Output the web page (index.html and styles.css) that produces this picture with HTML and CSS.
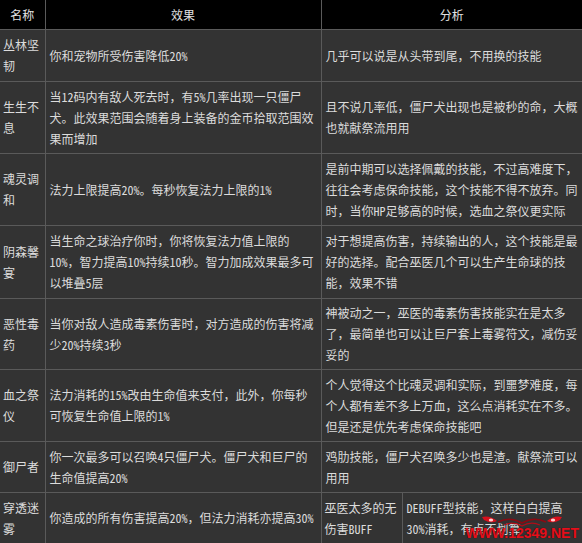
FILE: index.html
```html
<!DOCTYPE html>
<html lang="zh-CN">
<head>
<meta charset="utf-8">
<title>巫医被动技能分析</title>
<link rel="stylesheet" href="styles.css">
</head>
<body>
<div class="page">
<table class="sheet">
  <colgroup>
    <col class="w-name">
    <col class="w-effect">
    <col class="w-note-a">
    <col class="w-note-b">
  </colgroup>
  <thead>
    <tr class="r-head"><th>名称</th><th>效果</th><th colspan="2">分析</th></tr>
  </thead>
  <tbody>
    <tr class="r2">
      <td class="name">丛林坚韧</td>
      <td>你和宠物所受伤害降低<span class="n">20%</span></td>
      <td colspan="2">几乎可以说是从头带到尾，不用换的技能</td>
    </tr>
    <tr class="r3">
      <td class="name">生生不息</td>
      <td>当<span class="n">12</span>码内有敌人死去时，有<span class="n">5%</span>几率出现一只僵尸犬。此效果范围会随着身上装备的金币拾取范围效果而增加</td>
      <td colspan="2">且不说几率低，僵尸犬出现也是被秒的命，大概也就献祭流用用</td>
    </tr>
    <tr class="r3">
      <td class="name">魂灵调和</td>
      <td>法力上限提高<span class="n">20%</span>。每秒恢复法力上限的<span class="n">1%</span></td>
      <td colspan="2">是前中期可以选择佩戴的技能，不过高难度下，往往会考虑保命技能，这个技能不得不放弃。同时，当你<span class="n">HP</span>足够高的时候，选血之祭仪更实际</td>
    </tr>
    <tr class="r3b">
      <td class="name">阴森馨宴</td>
      <td>当生命之球治疗你时，你将恢复法力值上限的<span class="n">10%</span>，智力提高<span class="n">10%</span>持续<span class="n">10</span>秒。智力加成效果最多可以堆叠<span class="n">5</span>层</td>
      <td colspan="2">对于想提高伤害，持续输出的人，这个技能是最好的选择。配合巫医几个可以生产生命球的技能，效果不错</td>
    </tr>
    <tr class="r3c">
      <td class="name">恶性毒药</td>
      <td>当你对敌人造成毒素伤害时，对方造成的伤害将减少<span class="n">20%</span>持续<span class="n">3</span>秒</td>
      <td colspan="2">神被动之一，巫医的毒素伤害技能实在是太多了，最简单也可以让巨尸套上毒雾符文，减伤妥妥的</td>
    </tr>
    <tr class="r3">
      <td class="name">血之祭仪</td>
      <td>法力消耗的<span class="n">15%</span>改由生命值来支付，此外，你每秒可恢复生命值上限的<span class="n">1%</span></td>
      <td colspan="2">个人觉得这个比魂灵调和实际，到噩梦难度，每个人都有差不多上万血，这么点消耗实在不多。但是还是优先考虑保命技能吧</td>
    </tr>
    <tr class="r2b">
      <td class="name">御尸者</td>
      <td>你一次最多可以召唤<span class="n">4</span>只僵尸犬。僵尸犬和巨尸的生命值提高<span class="n">20%</span></td>
      <td colspan="2">鸡肋技能，僵尸犬召唤多少也是渣。献祭流可以用用</td>
    </tr>
    <tr class="r2b">
      <td class="name">穿透迷雾</td>
      <td>你造成的所有伤害提高<span class="n">20%</span>，但法力消耗亦提高<span class="n">30%</span></td>
      <td class="tight">巫医太多的无伤害<span class="n">BUFF</span></td>
      <td><span class="n">DEBUFF</span>型技能，这样白白提高<span class="n">30%</span>消耗，有点不划算</td>
    </tr>
  </tbody>
</table>

<div class="watermark">
  <svg class="mark-logo" width="84" height="14" viewBox="0 0 84 14" aria-hidden="true">
    <path d="M2 3 Q10 1 17 7 Q11 10 4 6 Z" fill="#d8101c"/>
    <ellipse cx="11" cy="6" rx="2.2" ry="1.6" fill="#ffd0d0"/>
    <path d="M82 3 Q74 1 67 7 Q73 10 80 6 Z" fill="#d8101c"/>
    <ellipse cx="73" cy="6" rx="2.2" ry="1.6" fill="#ffd0d0"/>
    <path d="M18 8 Q30 2 42 9 Q54 2 66 8" fill="none" stroke="#8a0a12" stroke-width="1.6"/>
    <path d="M24 11 Q33 7 42 12 Q51 7 60 11" fill="none" stroke="#b00d18" stroke-width="1.2"/>
  </svg>
  <span class="mark-text">WWW.12349.NET</span>
</div>
</div>
</body>
</html>
```

FILE: styles.css
```css
html, body {
  margin: 0;
  padding: 0;
  background: #333333;
  overflow: hidden;
}

.page {
  position: relative;
  width: 582px;
  height: 543px;
  overflow: hidden;
}

.sheet {
  width: 582px;
  table-layout: fixed;
  border-collapse: collapse;
  border-style: hidden hidden solid hidden;
  border-width: 1px;
  border-color: #5a5a5a;
  font-family: "Noto Sans CJK SC", "Noto Sans", sans-serif;
  font-size: 12px;
  line-height: 21px;
  color: #dcdcdc;
  background: #333333;
}

.w-name { width: 45px; }
.w-effect { width: 276px; }
.w-note-a { width: 81px; }
.w-note-b { width: 180px; }

.sheet th,
.sheet td {
  border: 1px solid #5a5a5a;
  padding: 0 4px;
  vertical-align: middle;
  text-align: left;
}

.sheet th {
  background: #000000;
  color: #e2e2e2;
  font-weight: normal;
  text-align: center;
  padding: 0;
}

.sheet td.name,
.sheet td.tight {
  padding: 0 3px;
}

.n {
  font-feature-settings: "hwid" 1;
}

.r-head { height: 29px; }
.r2 { height: 52px; }
.r3 { height: 72px; }
.r3b { height: 73px; }
.r3c { height: 71px; }
.r2b { height: 51px; }

.watermark {
  position: absolute;
  right: 3px;
  bottom: 3px;
  display: flex;
  flex-direction: column;
  align-items: center;
  pointer-events: none;
}

.mark-logo {
  display: block;
  margin-bottom: -2px;
}

.mark-text {
  font-family: "Liberation Sans", Arial, sans-serif;
  font-weight: bold;
  font-size: 14px;
  line-height: 14px;
  color: #e4101c;
  text-shadow: 0 0 1px #2a0004;
}
```
